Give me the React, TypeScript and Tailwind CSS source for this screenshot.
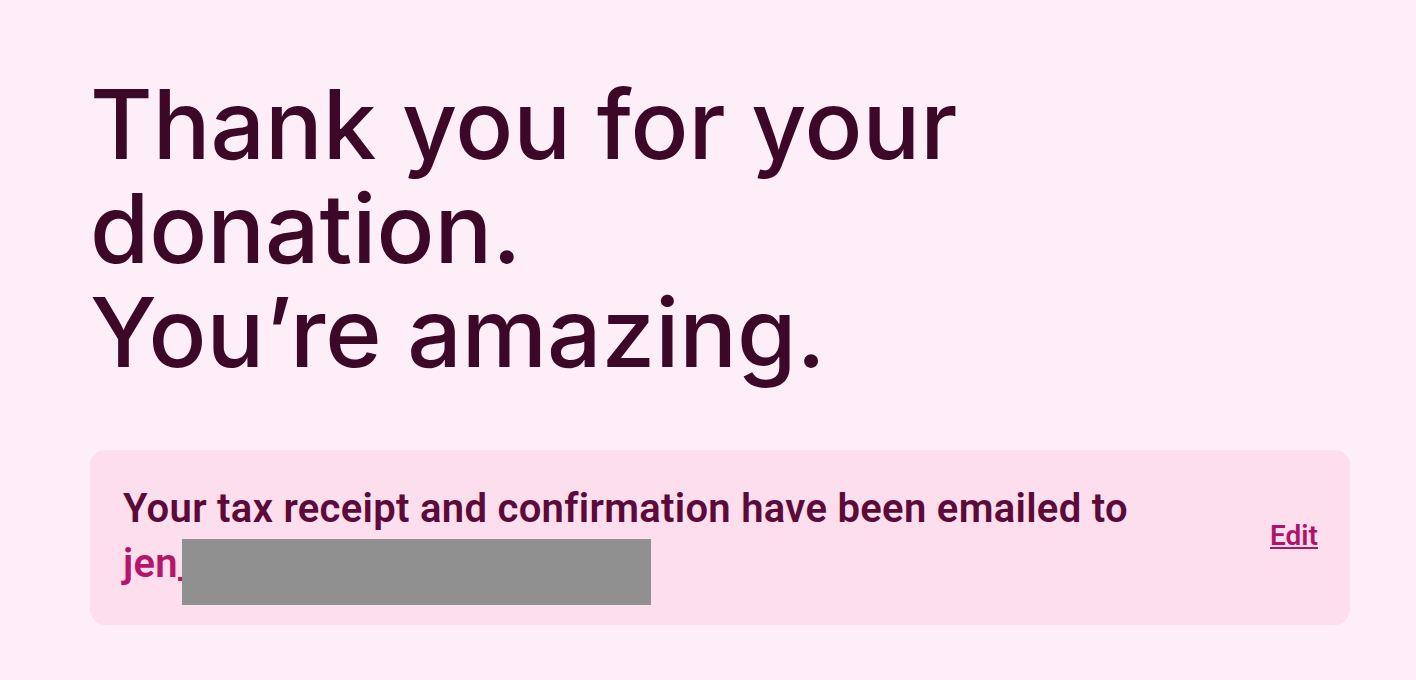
import React from "react";

export default function App() {
  return (
    <div className="min-h-screen w-full bg-[#feeef8] pl-[90px] pr-[66px] pt-[72px]">
      <h1
        className="max-w-[900px] text-[96px] font-medium leading-[104px] text-[#3d0828]"
        style={{ fontFamily: "Inter, 'Noto Sans', sans-serif" }}
      >
        Thank you for your donation.
        <br />
        You’re amazing.
      </h1>
      <div
        className="mt-[66px] flex items-center justify-between rounded-[16px] bg-[#fcdeed] pl-[33px] pr-[32px] pt-[31px] pb-[34px]"
        style={{ fontFamily: "Roboto, 'Liberation Sans', sans-serif" }}
      >
        <div className="text-[40px] font-semibold leading-[55px] tracking-[0.3px]">
          <div className="text-[#5c0a3a]">Your tax receipt and confirmation have been emailed to</div>
          <div className="relative h-[55px] text-[#b5166b]">
            jen_
            <span className="absolute left-[59px] top-[3px] h-[66px] w-[469px] bg-[#909090]" />
          </div>
        </div>
        <a href="#" className="text-[28px] font-semibold text-[#b0146a] underline">
          Edit
        </a>
      </div>
    </div>
  );
}
